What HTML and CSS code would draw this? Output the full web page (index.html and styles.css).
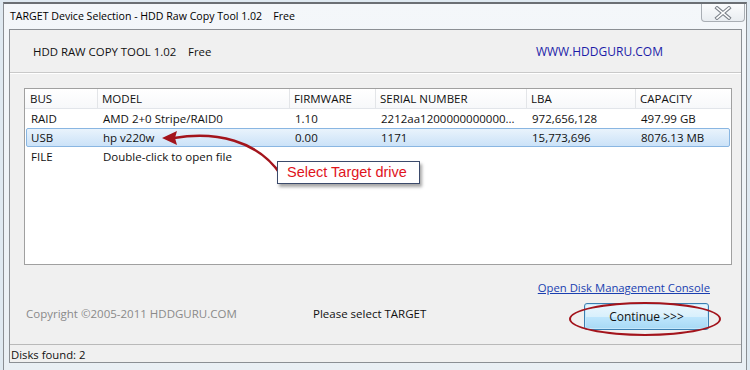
FILE: index.html
```html
<!DOCTYPE html>
<html lang="en">
<head>
  <meta charset="UTF-8">
  <title>TARGET Device Selection - HDD Raw Copy Tool 1.02</title>
  <link rel="stylesheet" href="styles.css">
</head>
<body>
  <div class="window">
    <div class="titlebar">
      <span class="title">TARGET Device Selection - HDD Raw Copy Tool 1.02&nbsp;&nbsp;&nbsp;&nbsp;Free</span>
      <span class="close">
        <svg width="20" height="14" viewBox="0 0 20 14">
          <path d="M4 2 L16 12 M16 2 L4 12" fill="none" stroke="#7d838b" stroke-width="3.6" stroke-linecap="square"/>
          <path d="M4 2 L16 12 M16 2 L4 12" fill="none" stroke="#fff" stroke-width="1.6" stroke-linecap="square"/>
        </svg>
      </span>
    </div>

    <div class="client">
      <div class="head">
        <span class="app-name">HDD RAW COPY TOOL 1.02&nbsp;&nbsp;&nbsp;&nbsp;Free</span>
        <span class="site">WWW.HDDGURU.COM</span>
      </div>

      <div class="body">
        <div class="list">
          <div class="row hdr">
            <span>BUS</span><span>MODEL</span><span>FIRMWARE</span><span>SERIAL NUMBER</span><span>LBA</span><span>CAPACITY</span>
          </div>
          <div class="row">
            <span>RAID</span><span>AMD 2+0 Stripe/RAID0</span><span>1.10</span><span>2212aa1200000000000...</span><span>972,656,128</span><span>497.99 GB</span>
          </div>
          <div class="row sel">
            <span>USB</span><span>hp v220w</span><span>0.00</span><span>1171</span><span>15,773,696</span><span>8076.13 MB</span>
          </div>
          <div class="row">
            <span>FILE</span><span class="wide">Double-click to open file</span>
          </div>
        </div>

        <div class="links">
          <a href="#" class="console">Open Disk Management Console</a>
        </div>

        <div class="foot">
          <span class="copy">Copyright ©2005-2011 HDDGURU.COM</span>
          <span class="hint">Please select TARGET</span>
          <button class="continue">Continue &gt;&gt;&gt;</button>
        </div>
      </div>

      <div class="status">Disks found: 2</div>
    </div>

    <!-- annotations drawn over the screenshot -->
    <svg class="arrow" width="750" height="370" viewBox="0 0 750 370">
      <path d="M281 175 C 258 140 215 131 174 138" fill="none" stroke="#a3141c" stroke-width="2.4"/>
      <path d="M162 138 L177 131 L175 138 L177 145 Z" fill="#a3141c"/>
    </svg>
    <div class="callout">Select Target drive</div>
    <div class="ring"></div>
  </div>
</body>
</html>
```

FILE: styles.css
```css
body { margin: 0; background: #dfe9f1; font-family: "Open Sans", "Noto Sans", sans-serif; font-size: 11.5px; color: #111; overflow: hidden; }

.window { position: relative; margin: 2px 0 0 3px; width: 744px; height: 368px; box-sizing: border-box; display: flex; flex-direction: column; padding: 0 4px 7px 5px; background: linear-gradient(#f4f7fa, #e9eff4); border-top: 2px solid #6b6f74; border-left: 1px solid #8a8e93; border-right: 1px solid #8a8e93; }

/* title bar */
.titlebar { height: 25px; display: flex; align-items: flex-start; justify-content: space-between; }
.title { padding: 5px 0 0 1px; font-size: 10.6px; line-height: 14px; color: #000; }
.close { width: 42px; height: 17px; margin-right: -3px; display: flex; align-items: center; justify-content: center; border: 1px solid #a9aeb4; border-top: 0; border-radius: 0 0 4px 4px; background: linear-gradient(#fbfcfd, #e9edf1); }

/* client area */
.client { flex: 1; display: flex; flex-direction: column; background: #f0f0f0; border: 1px solid #8b8f94; }
.head { height: 42px; display: flex; align-items: center; justify-content: space-between; padding: 0 78px 0 23px; border-bottom: 1px solid #c9c9c9; box-shadow: 0 1px 0 #fff; font-size: 11.4px; }
.site { color: #1c1ca8; font-size: 12px; }

.body { flex: 1; display: flex; flex-direction: column; padding: 15px 9px 0 14px; }

.list { height: 175px; background: #fff; border: 1px solid #a0a0a0; }
.row { display: grid; grid-template-columns: 72px 192px 86px 151px 109px 1fr; height: 19px; box-sizing: border-box; align-items: center; border: 1px solid transparent; margin: 0 1px; }
.row span { padding-left: 4px; white-space: nowrap; }
.row .wide { grid-column: span 4; }
.hdr { height: 20px; border: 0; border-bottom: 1px solid #e2e5ea; margin: 0; padding: 0 1px; background: linear-gradient(#fff, #f7f8fa); }
.hdr span { border-right: 1px solid #e3e5e8; height: 19px; line-height: 20px; }
.hdr span:last-child { border-right: 0; }
.sel { background: linear-gradient(#e9f3fc, #cbe2f8); border-color: #89b6e2; border-radius: 2px; }

.links { display: flex; justify-content: flex-end; padding: 15px 22px 0 0; }
.console { color: #1a3fb0; font-size: 11.3px; }

.foot { display: flex; align-items: center; margin-top: 6px; height: 30px; }
.copy { color: #8a8a8a; width: 287px; padding-left: 2px; margin-top: -5px; font-size: 11.5px; }
.hint { flex: 1; margin-top: -5px; font-size: 11.5px; }
.continue { width: 125px; height: 27px; margin-right: 23px; font-family: inherit; font-size: 12px; color: #111; border: 1px solid #3c7fb1; border-radius: 3px; background: linear-gradient(#eaf6fd 0%, #d9f0fc 50%, #bee6fd 51%, #a7d9f5 100%); box-shadow: inset 0 0 0 1px #c5e8fb; }

.status { height: 17px; margin-top: 10px; padding-left: 1px; border-top: 1px solid #b9b9b9; background: #f0f0f0; font-size: 11.3px; line-height: 19px; }

/* annotations */
.arrow { position: absolute; left: -4px; top: -4px; pointer-events: none; }
.callout { position: absolute; left: 273px; top: 157px; width: 143px; height: 23px; box-sizing: border-box; background: #fff; border: 1px solid #3b4a6b; color: #e0141c; font-family: "Liberation Sans", Arial, sans-serif; font-size: 14.5px; line-height: 21px; padding-left: 9px; box-shadow: 2px 3px 3px rgba(0,0,0,.35); }
.ring { position: absolute; left: 565px; top: 298px; width: 152px; height: 34px; box-sizing: border-box; border: 2px solid #a3141c; border-radius: 50%; }
```
